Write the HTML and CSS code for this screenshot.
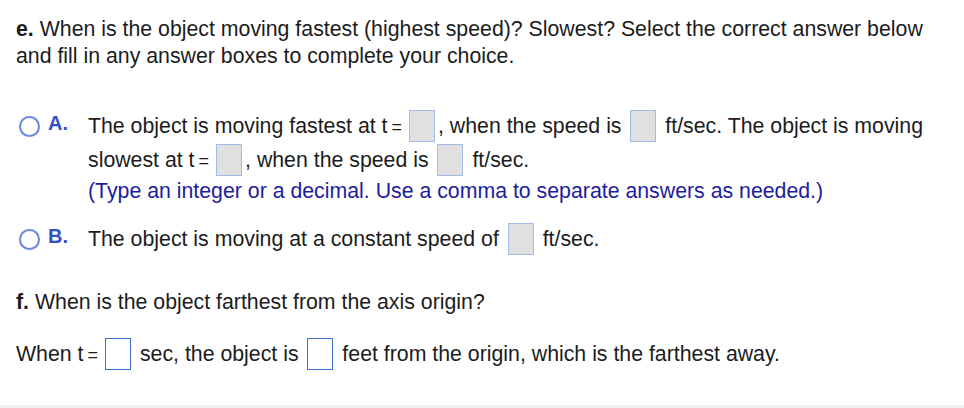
FILE: index.html
```html
<!DOCTYPE html>
<html>
<head>
<meta charset="utf-8">
<link rel="stylesheet" href="styles.css">
</head>
<body>
<div class="page">
  <p class="prompt"><b>e.</b> When is the object moving fastest (highest speed)? Slowest? Select the correct answer below and fill in any answer boxes to complete your choice.</p>

  <div class="option opt-a">
    <span class="radio"></span>
    <span class="letter">A.</span>
    <div class="opt-text">
      <div class="line">The object is moving fastest at t<span class="eq">=</span><span class="box"></span>, when the speed is <span class="box"></span> ft/sec. The object is moving</div>
      <div class="line">slowest at t<span class="eq">=</span><span class="box"></span>, when the speed is <span class="box"></span> ft/sec.</div>
      <div class="hint">(Type an integer or a decimal. Use a comma to separate answers as needed.)</div>
    </div>
  </div>

  <div class="option opt-b">
    <span class="radio"></span>
    <span class="letter">B.</span>
    <div class="opt-text">
      <div class="line">The object is moving at a constant speed of <span class="box"></span> ft/sec.</div>
    </div>
  </div>

  <p class="prompt prompt-f"><b>f.</b> When is the object farthest from the axis origin?</p>

  <div class="answer">When t<span class="eq">=</span><span class="box active"></span> sec, the object is <span class="box active"></span> feet from the origin, which is the farthest away.</div>
</div>
<div class="footer-strip"></div>
</body>
</html>
```

FILE: styles.css
```css
html, body {
  margin: 0;
  padding: 0;
  background: #fff;
}
body {
  font-family: "Liberation Sans", Arial, sans-serif;
  font-size: 21.3px;
  color: #1c1c1c;
  width: 964px;
  height: 408px;
  position: relative;
  overflow: hidden;
}
.page {
  padding: 16px 16px 0 16px;
}
.prompt {
  margin: 0;
  line-height: 27px;
  width: 932px;
}
.prompt b {
  font-weight: bold;
}
.option {
  display: flex;
  align-items: flex-start;
  padding-left: 3px;
}
.opt-a {
  margin-top: 40px;
}
.opt-b {
  margin-top: 17px;
}
.radio {
  width: 17px;
  height: 17px;
  border: 2px solid #6d89dc;
  border-radius: 50%;
  margin-top: 6px;
  flex: none;
  box-shadow: 0 0 1px #a9bbee;
}
.letter {
  color: #3550c8;
  font-weight: bold;
  font-size: 20px;
  margin-left: 8px;
  width: 40px;
  line-height: 20px;
  margin-top: 3px;
  flex: none;
}
.opt-text {
  flex: 1;
}
.line {
  line-height: 32px;
  height: 32px;
  white-space: nowrap;
}
.opt-a .line + .line {
  margin-top: 2px;
}
.hint {
  color: #1d1d9e;
  line-height: 30px;
}
.eq {
  margin: 0 4px 0 4px;
  font-size: 18px;
}
.box {
  display: inline-block;
  width: 24px;
  height: 30px;
  background: #e0e0e0;
  border: 1px solid #a2bbe9;
  vertical-align: middle;
  margin: -2px 3px 0 3px;
}
.box.active {
  background: #fff;
  border: 1px solid #3b6fd1;
}
.prompt-f {
  margin-top: 34px;
}
.answer {
  margin-top: 22px;
  line-height: 32px;
  white-space: nowrap;
}
.footer-strip {
  position: absolute;
  left: 0;
  right: 0;
  bottom: 0;
  height: 3px;
  background: #f0f0f0;
}
```
